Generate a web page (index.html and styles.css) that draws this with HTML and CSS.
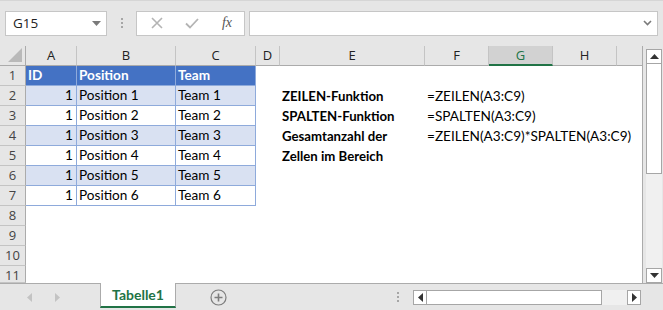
FILE: index.html
```
<!DOCTYPE html>
<html lang="de">
<head>
    <meta charset="UTF-8">
    <title>Tabelle1</title>
    <link rel="stylesheet" href="styles.css">
</head>
<body>
<div class="app">
    <!-- Name box + formula bar -->
    <div class="toolbar">
        <div class="namebox">
            <span>G15</span>
            <svg class="drop" width="9" height="5" viewBox="0 0 9 5"><path d="M0 0h9L4.5 5z" fill="#7a7a7a"/></svg>
        </div>
        <div class="grip"><i></i><i></i><i></i></div>
        <div class="fbuttons">
            <svg width="12" height="12" viewBox="0 0 12 12"><path d="M1 1l10 10M11 1L1 11" stroke="#b4b4b4" stroke-width="1.6"/></svg>
            <svg width="14" height="12" viewBox="0 0 14 12"><path d="M1 6.5l4 4L13 2" stroke="#b4b4b4" stroke-width="1.8" fill="none"/></svg>
            <span class="fx">fx</span>
        </div>
        <div class="fbar">
            <svg width="9" height="6" viewBox="0 0 9 6"><path d="M1 1l3.5 3.5L8 1" stroke="#7a7a7a" stroke-width="1.6" fill="none"/></svg>
        </div>
    </div>

    <div class="main">
        <div class="sheet">
            <div class="corner"><svg width="14" height="14" viewBox="0 0 14 14"><path d="M14 0v14H0z" fill="#b9b9b9"/></svg></div>
            <div class="ch">A</div><div class="ch">B</div><div class="ch">C</div><div class="ch">D</div>
            <div class="ch">E</div><div class="ch">F</div><div class="ch sel">G</div><div class="ch">H</div><div class="ch last"></div>

            <div class="rh">1</div>
            <div class="c th">ID</div><div class="c th">Position</div><div class="c th">Team</div>
            <div class="c"></div><div class="c"></div><div class="c"></div><div class="c"></div><div class="c"></div><div class="c"></div>

            <div class="rh">2</div>
            <div class="c t band num">1</div><div class="c t band">Position 1</div><div class="c t band">Team 1</div>
            <div class="c"></div><div class="c bold">ZEILEN-Funktion</div><div class="c">=ZEILEN(A3:C9)</div><div class="c"></div><div class="c"></div><div class="c"></div>

            <div class="rh">3</div>
            <div class="c t num">1</div><div class="c t">Position 2</div><div class="c t">Team 2</div>
            <div class="c"></div><div class="c bold">SPALTEN-Funktion</div><div class="c">=SPALTEN(A3:C9)</div><div class="c"></div><div class="c"></div><div class="c"></div>

            <div class="rh">4</div>
            <div class="c t band num">1</div><div class="c t band">Position 3</div><div class="c t band">Team 3</div>
            <div class="c"></div><div class="c bold">Gesamtanzahl der</div><div class="c">=ZEILEN(A3:C9)*SPALTEN(A3:C9)</div><div class="c"></div><div class="c"></div><div class="c"></div>

            <div class="rh">5</div>
            <div class="c t num">1</div><div class="c t">Position 4</div><div class="c t">Team 4</div>
            <div class="c"></div><div class="c bold">Zellen im Bereich</div><div class="c"></div><div class="c"></div><div class="c"></div><div class="c"></div>

            <div class="rh">6</div>
            <div class="c t band num">1</div><div class="c t band">Position 5</div><div class="c t band">Team 5</div>
            <div class="c"></div><div class="c"></div><div class="c"></div><div class="c"></div><div class="c"></div><div class="c"></div>

            <div class="rh">7</div>
            <div class="c t num">1</div><div class="c t">Position 6</div><div class="c t">Team 6</div>
            <div class="c"></div><div class="c"></div><div class="c"></div><div class="c"></div><div class="c"></div><div class="c"></div>

            <div class="rh">8</div>
            <div class="c"></div><div class="c"></div><div class="c"></div><div class="c"></div><div class="c"></div><div class="c"></div><div class="c"></div><div class="c"></div><div class="c"></div>
            <div class="rh">9</div>
            <div class="c"></div><div class="c"></div><div class="c"></div><div class="c"></div><div class="c"></div><div class="c"></div><div class="c"></div><div class="c"></div><div class="c"></div>
            <div class="rh">10</div>
            <div class="c"></div><div class="c"></div><div class="c"></div><div class="c"></div><div class="c"></div><div class="c"></div><div class="c"></div><div class="c"></div><div class="c"></div>
            <div class="rh">11</div>
            <div class="c"></div><div class="c"></div><div class="c"></div><div class="c"></div><div class="c"></div><div class="c"></div><div class="c"></div><div class="c"></div><div class="c"></div>
        </div>

        <div class="vscroll">
            <div class="sbtn"><svg width="9" height="5" viewBox="0 0 9 5"><path d="M0 5h9L4.5 0z" fill="#333"/></svg></div>
            <div class="vthumb"></div>
            <div class="vtrack"></div>
            <div class="sbtn"><svg width="9" height="5" viewBox="0 0 9 5"><path d="M0 0h9L4.5 5z" fill="#333"/></svg></div>
        </div>
    </div>

    <div class="tabbar">
        <div class="nav">
            <svg width="5" height="9" viewBox="0 0 5 9"><path d="M5 0v9L0 4.5z" fill="#c3c3c3"/></svg>
            <svg width="5" height="9" viewBox="0 0 5 9"><path d="M0 0v9L5 4.5z" fill="#c3c3c3"/></svg>
        </div>
        <div class="tab">Tabelle1</div>
        <div class="addsheet">
            <svg width="17" height="17" viewBox="0 0 17 17"><circle cx="8.5" cy="8.5" r="7.5" fill="none" stroke="#7d7d7d" stroke-width="1.2"/><path d="M8.5 4.5v8M4.5 8.5h8" stroke="#7d7d7d" stroke-width="1.6"/></svg>
        </div>
        <div class="grip small"><i></i><i></i><i></i></div>
        <div class="hscroll">
            <div class="sbtn"><svg width="5" height="9" viewBox="0 0 5 9"><path d="M5 0v9L0 4.5z" fill="#333"/></svg></div>
            <div class="hthumb"></div>
            <div class="htrack"></div>
            <div class="sbtn"><svg width="5" height="9" viewBox="0 0 5 9"><path d="M0 0v9L5 4.5z" fill="#333"/></svg></div>
        </div>
    </div>
</div>
</body>
</html>
```
FILE: styles.css
```
* {
    box-sizing: border-box;
    margin: 0;
    padding: 0;
}
html,
body {
    width: 663px;
    height: 310px;
    overflow: hidden;
    background: #e6e6e6;
    font-family: Lato, "Liberation Sans", sans-serif;
}
.app {
    display: flex;
    flex-direction: column;
    width: 663px;
    height: 310px;
}

/* formula bar area */
.toolbar {
    display: flex;
    align-items: center;
    height: 46px;
    padding: 10px 5px 11px 5px;
    border-top: 1px solid #d6d6d6;
}
.namebox {
    display: flex;
    align-items: center;
    justify-content: space-between;
    width: 102px;
    height: 25px;
    padding: 0 5px 0 7px;
    background: #fff;
    border: 1px solid #c6c6c6;
    font-family: "Open Sans", sans-serif;
    font-size: 13.5px;
    color: #222;
}
.grip {
    display: flex;
    flex-direction: column;
    gap: 2px;
    margin: 0 13px 0 14px;
}
.grip i {
    display: block;
    width: 2px;
    height: 2px;
    background: #a6a6a6;
}
.fbuttons {
    display: flex;
    align-items: center;
    justify-content: space-between;
    width: 109px;
    height: 25px;
    padding: 0 12px 0 14px;
    background: #fff;
    border: 1px solid #c6c6c6;
}
.fx {
    font-family: "Liberation Serif", serif;
    font-style: italic;
    font-size: 14px;
    color: #555;
}
.fbar {
    display: flex;
    align-items: center;
    justify-content: flex-end;
    flex: 1;
    height: 25px;
    margin-left: 4px;
    padding-right: 5px;
    background: #fff;
    border: 1px solid #c6c6c6;
}

/* sheet */
.main {
    display: flex;
    height: 237px;
}
.sheet {
    display: grid;
    grid-template-columns: 26px 51px 99px 80px 24px 145px 64px 64px 64px 25px;
    grid-template-rows: repeat(11, 20px) 17px;
    width: 643px;
    overflow: hidden;
    background: #fff;
    border-right: 1px solid #ababab;
    font-size: 13.6px;
    color: #000;
}
.corner,
.ch,
.rh {
    background: #e6e6e6;
    border-right: 1px solid #c4c4c4;
    border-bottom: 1px solid #ababab;
    font-family: "Open Sans", sans-serif;
    font-size: 13px;
    color: #222;
    text-align: center;
    line-height: 19px;
}
.corner {
    display: flex;
    align-items: flex-end;
    justify-content: flex-end;
    padding: 0 3px 3px 0;
    border-right-color: #ababab;
}
.ch.sel {
    background: #d2d2d2;
    color: #217346;
    border-bottom: 2px solid #217346;
}
.ch.last {
    border-right: none;
}
.rh {
    border-right-color: #ababab;
    border-bottom-color: #c4c4c4;
    color: #444;
}
.c {
    padding: 0 2px;
    line-height: 20px;
    white-space: nowrap;
    overflow: visible;
}
.c.t {
    border-right: 1px solid #8eaadb;
    border-bottom: 1px solid #8eaadb;
    line-height: 19px;
}
.c.th {
    background: #4472c4;
    color: #fff;
    font-weight: bold;
    border-right: 1px solid #8eaadb;
    border-bottom: 1px solid #8eaadb;
    line-height: 19px;
}
.band {
    background: #d9e1f2;
}
.num {
    text-align: right;
    padding-right: 3px;
}
.bold {
    font-weight: bold;
    font-size: 13.2px;
}

/* scrollbars */
.vscroll {
    display: flex;
    flex-direction: column;
    width: 20px;
    padding: 3px 1px 0 3px;
}
.sbtn {
    display: flex;
    align-items: center;
    justify-content: center;
    width: 16px;
    height: 15px;
    background: #fff;
    border: 1px solid #a6a6a6;
}
.vthumb {
    height: 111px;
    margin-top: -1px;
    background: #fff;
    border: 1px solid #a6a6a6;
}
.vtrack {
    flex: 1;
    background: #f0f0f0;
}

.tabbar {
    display: flex;
    align-items: flex-start;
    height: 27px;
    border-top: 1px solid #ababab;
}
.nav {
    display: flex;
    gap: 23px;
    width: 100px;
    padding: 9px 0 0 27px;
}
.tab {
    width: 76px;
    height: 25px;
    margin-top: -1px;
    background: #fff;
    border: 1px solid #ababab;
    border-top: none;
    border-bottom: 2px solid #217346;
    color: #217346;
    font-weight: bold;
    font-size: 14px;
    text-align: center;
    line-height: 23px;
}
.addsheet {
    padding: 5px 0 0 34px;
    width: 174px;
}
.grip.small {
    margin: 8px 14px 0 47px;
}
.hscroll {
    display: flex;
    width: 228px;
    margin-top: 6px;
}
.hscroll .sbtn {
    width: 14px;
}
.hthumb {
    width: 176px;
    height: 15px;
    margin-left: -1px;
    background: #fff;
    border: 1px solid #a6a6a6;
}
.htrack {
    flex: 1;
    background: #f0f0f0;
    height: 15px;
}
```
